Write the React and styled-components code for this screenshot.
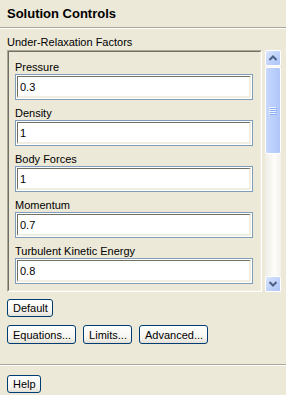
import React from 'react'
import styled, { createGlobalStyle } from 'styled-components'

const GlobalStyle = createGlobalStyle`
    html, body {
        margin: 0;
        padding: 0;
        background: #ece9d8;
    }
    body {
        font-family: "Liberation Sans", Arial, sans-serif;
        font-size: 11px;
        color: #000;
    }
`

const Page = styled.div`
    width: 286px;
    height: 395px;
    display: flex;
    flex-direction: column;
    background: #ece9d8;
    overflow: hidden;
`

const Title = styled.div`
    height: 27px;
    box-sizing: border-box;
    padding: 6px 0 0 7px;
    font-size: 13px;
    font-weight: bold;
    line-height: 16px;
`

const Separator = styled.div`
    height: 0;
    border-top: 1px solid #aca899;
    border-bottom: 1px solid #fff;
`

const GroupLabel = styled.div`
    padding: 7px 0 0 7px;
    height: 14px;
    line-height: 13px;
`

const ScrollRow = styled.div`
    display: flex;
    gap: 3px;
    padding-left: 7px;
    height: 242px;
`

const Frame = styled.div`
    width: 255px;
    box-sizing: border-box;
    border-top: 1px solid #aca899;
    border-left: 1px solid #aca899;
    border-right: 1px solid #fff;
    border-bottom: 1px solid #fff;
    overflow: hidden;
`

const FrameInner = styled.div`
    height: 100%;
    box-sizing: border-box;
    border-top: 1px solid #716f64;
    border-left: 1px solid #716f64;
    border-right: 1px solid #f1efe2;
    border-bottom: 1px solid #f1efe2;
    padding: 2px 7px 0 6px;
    overflow: hidden;
`

const Field = styled.div`
    display: flex;
    flex-direction: column;
`

const FieldLabel = styled.div`
    height: 20px;
    box-sizing: border-box;
    padding-top: 7px;
    line-height: 13px;
`

const InputBox = styled.div`
    width: 238px;
    height: 26px;
    box-sizing: border-box;
    border: 1px solid #7f9db9;
    padding: 1px;
    background: #fff;
`

const Input = styled.input`
    width: 100%;
    height: 100%;
    box-sizing: border-box;
    margin: 0;
    border-top: 1px solid #716f64;
    border-left: 1px solid #716f64;
    border-right: 2px solid #f1efe2;
    border-bottom: 2px solid #f1efe2;
    padding: 0 0 0 2px;
    font-family: "Liberation Sans", Arial, sans-serif;
    font-size: 11px;
    color: #000;
    outline: none;
`

const ScrollBar = styled.div`
    width: 16px;
    display: flex;
    flex-direction: column;
    background: linear-gradient(to right, #eeede5, #fdfdfa 60%, #f3f1ec);
`

const ScrollButton = styled.div`
    width: 16px;
    height: 16px;
    box-sizing: border-box;
    border: 1px solid #fff;
    border-radius: 2px;
    background: linear-gradient(135deg, #dbe6fd, #bdd0fb 60%, #aec5f8);
    display: flex;
    align-items: center;
    justify-content: center;
`

const Thumb = styled.div`
    margin-top: 1px;
    height: 87px;
    box-sizing: border-box;
    border: 1px solid #fff;
    border-radius: 2px;
    background: linear-gradient(to right, #c8d8fc, #bbcffb 50%, #b0c6f8);
    display: flex;
    align-items: center;
    justify-content: center;
`

const Track = styled.div`
    flex: 1;
`

const ButtonRow = styled.div`
    display: flex;
    gap: 7px;
    padding-left: 7px;
    margin-top: ${props => props.top}px;
`

const Button = styled.button`
    height: ${props => props.h || 18}px;
    box-sizing: border-box;
    margin: 0;
    padding: 0 4px 0 5px;
    border: 1px solid #003c74;
    border-radius: 3px;
    background: linear-gradient(to bottom, #ffffff, #f5f4ef 70%, #e3e0d5);
    font-family: "Liberation Sans", Arial, sans-serif;
    font-size: 11px;
    color: #000;
    line-height: 14px;
`

const BottomSeparator = styled(Separator)`
    margin-top: 20px;
`

const fields = [
    { label: 'Pressure', value: '0.3' },
    { label: 'Density', value: '1' },
    { label: 'Body Forces', value: '1' },
    { label: 'Momentum', value: '0.7' },
    { label: 'Turbulent Kinetic Energy', value: '0.8' },
]

const Arrow = ({ down }) => (
    <svg width="8" height="6" viewBox="0 0 8 6">
        <path
            d={down ? 'M0.5 1 L4 4.5 L7.5 1' : 'M0.5 5 L4 1.5 L7.5 5'}
            fill="none"
            stroke="#4d6185"
            strokeWidth="2"
        />
    </svg>
)

const Grip = () => (
    <svg width="8" height="8" viewBox="0 0 8 8">
        {[0, 2, 4, 6].map(y => (
            <g key={y}>
                <rect x="0" y={y} width="7" height="1" fill="#eef4fe" />
                <rect x="1" y={y + 1} width="7" height="1" fill="#8cb0f8" />
            </g>
        ))}
    </svg>
)

const App = () => {
    return (
        <Page>
            <GlobalStyle />
            <Title>Solution Controls</Title>
            <Separator />
            <GroupLabel>Under-Relaxation Factors</GroupLabel>
            <ScrollRow>
                <Frame>
                    <FrameInner>
                        {fields.map(field => (
                            <Field key={field.label}>
                                <FieldLabel>{field.label}</FieldLabel>
                                <InputBox>
                                    <Input defaultValue={field.value} />
                                </InputBox>
                            </Field>
                        ))}
                    </FrameInner>
                </Frame>
                <ScrollBar>
                    <ScrollButton><Arrow /></ScrollButton>
                    <Thumb><Grip /></Thumb>
                    <Track />
                    <ScrollButton><Arrow down /></ScrollButton>
                </ScrollBar>
            </ScrollRow>
            <ButtonRow top={7}>
                <Button>Default</Button>
            </ButtonRow>
            <ButtonRow top={8}>
                <Button h={19}>Equations...</Button>
                <Button h={19}>Limits...</Button>
                <Button h={19}>Advanced...</Button>
            </ButtonRow>
            <BottomSeparator />
            <ButtonRow top={9}>
                <Button>Help</Button>
            </ButtonRow>
        </Page>
    )
}

export default App
